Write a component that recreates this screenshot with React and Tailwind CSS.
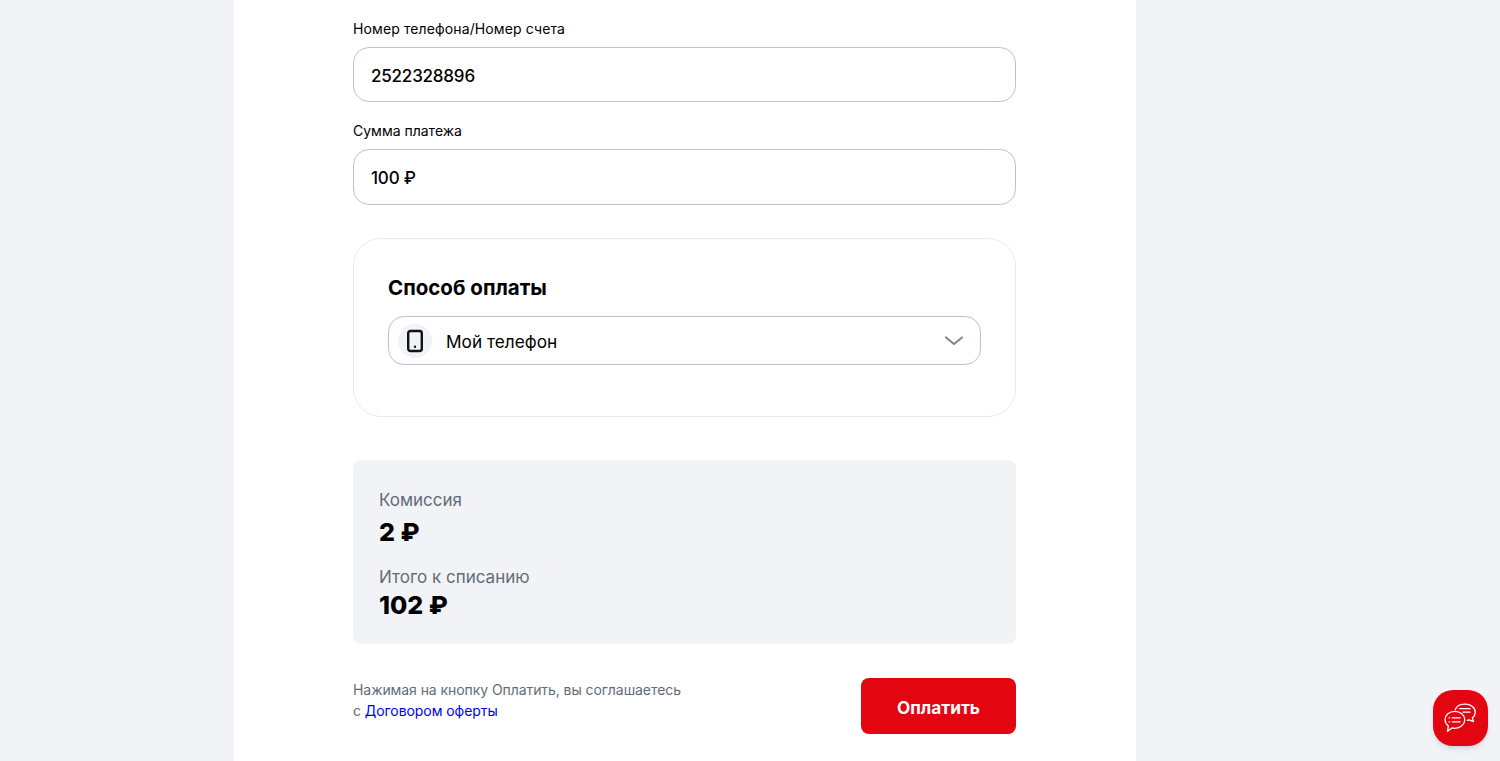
import React from "react";

function PhoneIcon() {
  return (
    <svg width="18" height="24" viewBox="0 0 18 24" fill="none">
      <rect x="2.2" y="2" width="13.6" height="20" rx="2.2" stroke="#111316" strokeWidth="2.4" />
      <circle cx="9" cy="17.8" r="1.2" fill="#111316" />
    </svg>
  );
}

function ChatIcon() {
  return (
    <svg width="33" height="30" viewBox="0 0 33 30" fill="none" stroke="#fff" strokeWidth="1.3" strokeLinecap="round" strokeLinejoin="round">
      <path d="M11.2 6.800C12.400 3.400 16 1.200 20.500 1.200h.8c5.500 0 10 3.500 10 8.100 0 2.300-1.100 4.300-2.900 5.800l1.200 3.600-4.600-1.800c-.5.200-1.100.300-1.700.400" />
      <path d="M10.800 8.300c5.500 0 10 3.800 10 8.500s-4.500 8.500-10 8.500c-1 0-2-.1-2.900-.4l-4.400 3.300.9-5.300C2.300 21.300 1 19.200 1 16.800c0-4.700 4.300-8.500 9.800-8.500z" />
      <path d="M15.500 5.700h10.500M19 9.200h7" />
      <path d="M8.200 14.800h8M8.200 18.800h8" />
      <path d="M5 14.800h.6M5 18.800h.6" />
    </svg>
  );
}

function Field({ label, value, className, labelClass, boxClass }) {
  return (
    <div className={className}>
      <div className={"text-sm leading-5 text-black " + (labelClass || "")}>{label}</div>
      <div className={"mt-2 flex items-center rounded-2xl border border-[#bcc3d0] bg-white px-[17px] pt-[4px] text-[17px] font-[450] tracking-[-0.2px] text-black " + boxClass}>
        {value}
      </div>
    </div>
  );
}

export default function App() {
  return (
    <div className="min-h-[761px] overflow-hidden bg-[#f2f3f7] font-['Inter','Noto_Sans',sans-serif]">
      <main className="ml-[234px] min-h-[761px] w-[902px] bg-white pb-[27px] pl-[119px] pr-[120px] pt-[19px]">
        <Field label="Номер телефона/Номер счета" labelClass="tracking-[0.11px]" boxClass="h-[55px]" value="2522328896" />
        <Field label="Сумма платежа" value="100 ₽" boxClass="h-[56px]" className="mt-[19px]" />

        <section className="mt-[33px] h-[179px] rounded-[28px] border border-[#e7eaf0] px-[34px] pt-[35px]">
          <h2 className="text-[20.5px] font-bold leading-7 text-black">Способ оплаты</h2>
          <div className="mt-[14px] flex h-[49px] items-center rounded-2xl border border-[#bcc3d0] pl-[9px] pr-[16px]">
            <div className="flex h-[34px] w-[34px] items-center justify-center rounded-full bg-[#f2f3f7]">
              <PhoneIcon />
            </div>
            <span className="ml-[14px] pt-[2px] text-[17.25px] text-black">Мой телефон</span>
            <svg className="ml-auto" width="20" height="12" viewBox="0 0 20 12" fill="none">
              <path d="M2 2.500l8 6.500 8-6.500" stroke="#7f8894" strokeWidth="2.2" strokeLinecap="round" strokeLinejoin="round" />
            </svg>
          </div>
        </section>

        <section className="mt-[43px] h-[184px] rounded-lg bg-[#f2f3f7] pl-[26px] pt-[28px]">
          <div className="text-[17px] leading-6 text-[#626c77]">Комиссия</div>
          <div className="mt-[4px] text-[25px] font-extrabold leading-8 text-black">2 ₽</div>
          <div className="mt-[17px] text-[17px] leading-6 text-[#626c77]">Итого к списанию</div>
          <div className="text-[25px] font-extrabold leading-8 text-black">102 ₽</div>
        </section>

        <div className="mt-[34px] flex items-start justify-between">
          <p className="pt-[1px] text-sm leading-[21px] tracking-[-0.07px] text-[#626c77]">
            Нажимая на кнопку Оплатить, вы соглашаетесь
            <br />с <a className="text-[#0000ee]">Договором оферты</a>
          </p>
          <button className="h-[56px] w-[155px] rounded-lg bg-[#e30611] pt-[4px] text-[17.25px] font-bold text-white">
            Оплатить
          </button>
        </div>
      </main>

      <button className="fixed left-[1433px] top-[690px] flex h-[56px] w-[55px] items-center justify-center rounded-[20px] bg-[#e30611] shadow-md">
        <ChatIcon />
      </button>
    </div>
  );
}
